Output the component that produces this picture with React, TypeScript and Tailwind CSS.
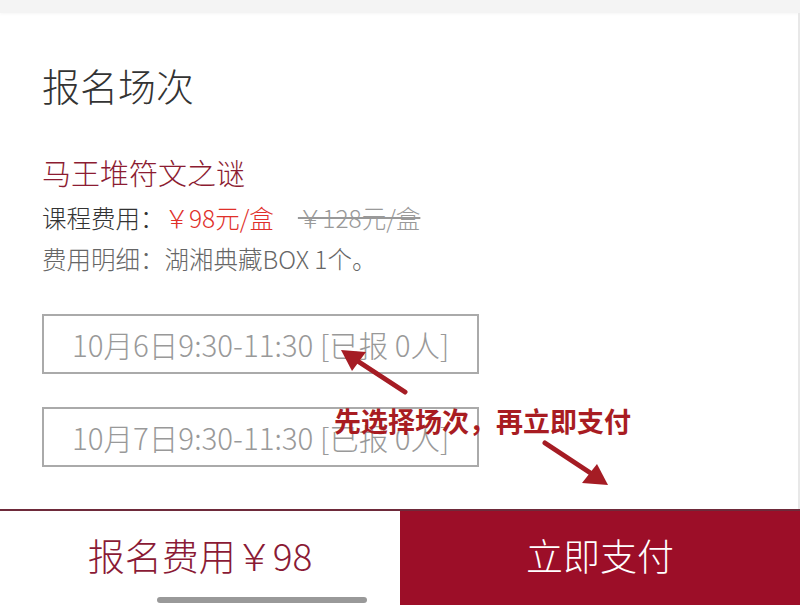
export default function App() {
    return (
        <div
            className="relative flex h-[605px] w-[800px] flex-col overflow-hidden bg-white"
            style={{ fontFamily: "'Noto Sans CJK SC', 'Noto Sans', sans-serif" }}
        >
            {/* top strip */}
            <div className="h-[13px] shrink-0 bg-[#f4f4f4] shadow-[0_1px_3px_rgba(0,0,0,0.04)]" />

            {/* content */}
            <div className="flex flex-1 flex-col border-r-2 border-[#e8e8e8] px-[42px] font-light">
                <h1 className="mt-[49px] text-[38px] leading-[46px] font-light text-[#333]">报名场次</h1>

                <p className="mt-[47px] text-[29px] leading-[34px] text-[#8c1c32]">马王堆符文之谜</p>

                <div className="mt-[13px] flex items-center text-[24.5px] leading-[32px]">
                    <span className="text-[#333]">课程费用：</span>
                    <span className="text-[#e0302a]">￥98元/盒</span>
                    <span className="ml-[24px] text-[#999] line-through">￥128元/盒</span>
                </div>

                <p className="mt-[9px] text-[24.5px] leading-[32px] text-[#666]">费用明细：湖湘典藏BOX 1个。</p>

                <div className="mt-[39px] flex flex-col gap-[33px]">
                    <SessionBox label="10月6日9:30-11:30 [已报 0人]" />
                    <SessionBox label="10月7日9:30-11:30 [已报 0人]" />
                </div>
            </div>

            {/* bottom bar */}
            <div className="flex h-[96px] shrink-0 border-t-2 border-[#6e2a3a] font-light">
                <div className="flex w-[400px] items-center justify-center pb-[4px] text-[37px] text-[#8a1a35]">
                    报名费用￥98
                </div>
                <div className="flex flex-1 items-center justify-center bg-[#9c0e28] pb-[4px] text-[37px] text-white">
                    立即支付
                </div>
            </div>

            {/* home indicator */}
            <div className="absolute top-[597px] left-[157px] h-[6px] w-[210px] rounded-full bg-black/40" />

            {/* annotation overlay */}
            <svg className="pointer-events-none absolute inset-0" width="800" height="605" viewBox="0 0 800 605">
                <line x1="405" y1="392" x2="356" y2="360" stroke="#a51c24" strokeWidth="5" strokeLinecap="round" />
                <polygon points="341,350 366,352 352,371" fill="#a51c24" />
                <line x1="545" y1="443" x2="592" y2="474" stroke="#a51c24" strokeWidth="5" strokeLinecap="round" />
                <polygon points="608,485 582,483 597,464" fill="#a51c24" />
            </svg>
            <div className="absolute top-[404px] left-[334px] text-[27px] leading-[34px] font-bold text-[#a81c22]">
                先选择场次，再立即支付
            </div>
        </div>
    );
}

function SessionBox({ label }: { label: string }) {
    return (
        <div className="flex h-[60px] w-[437px] items-center border-2 border-[#aaa] pl-[28px] text-[29.5px] text-[#999]">
            {label}
        </div>
    );
}
